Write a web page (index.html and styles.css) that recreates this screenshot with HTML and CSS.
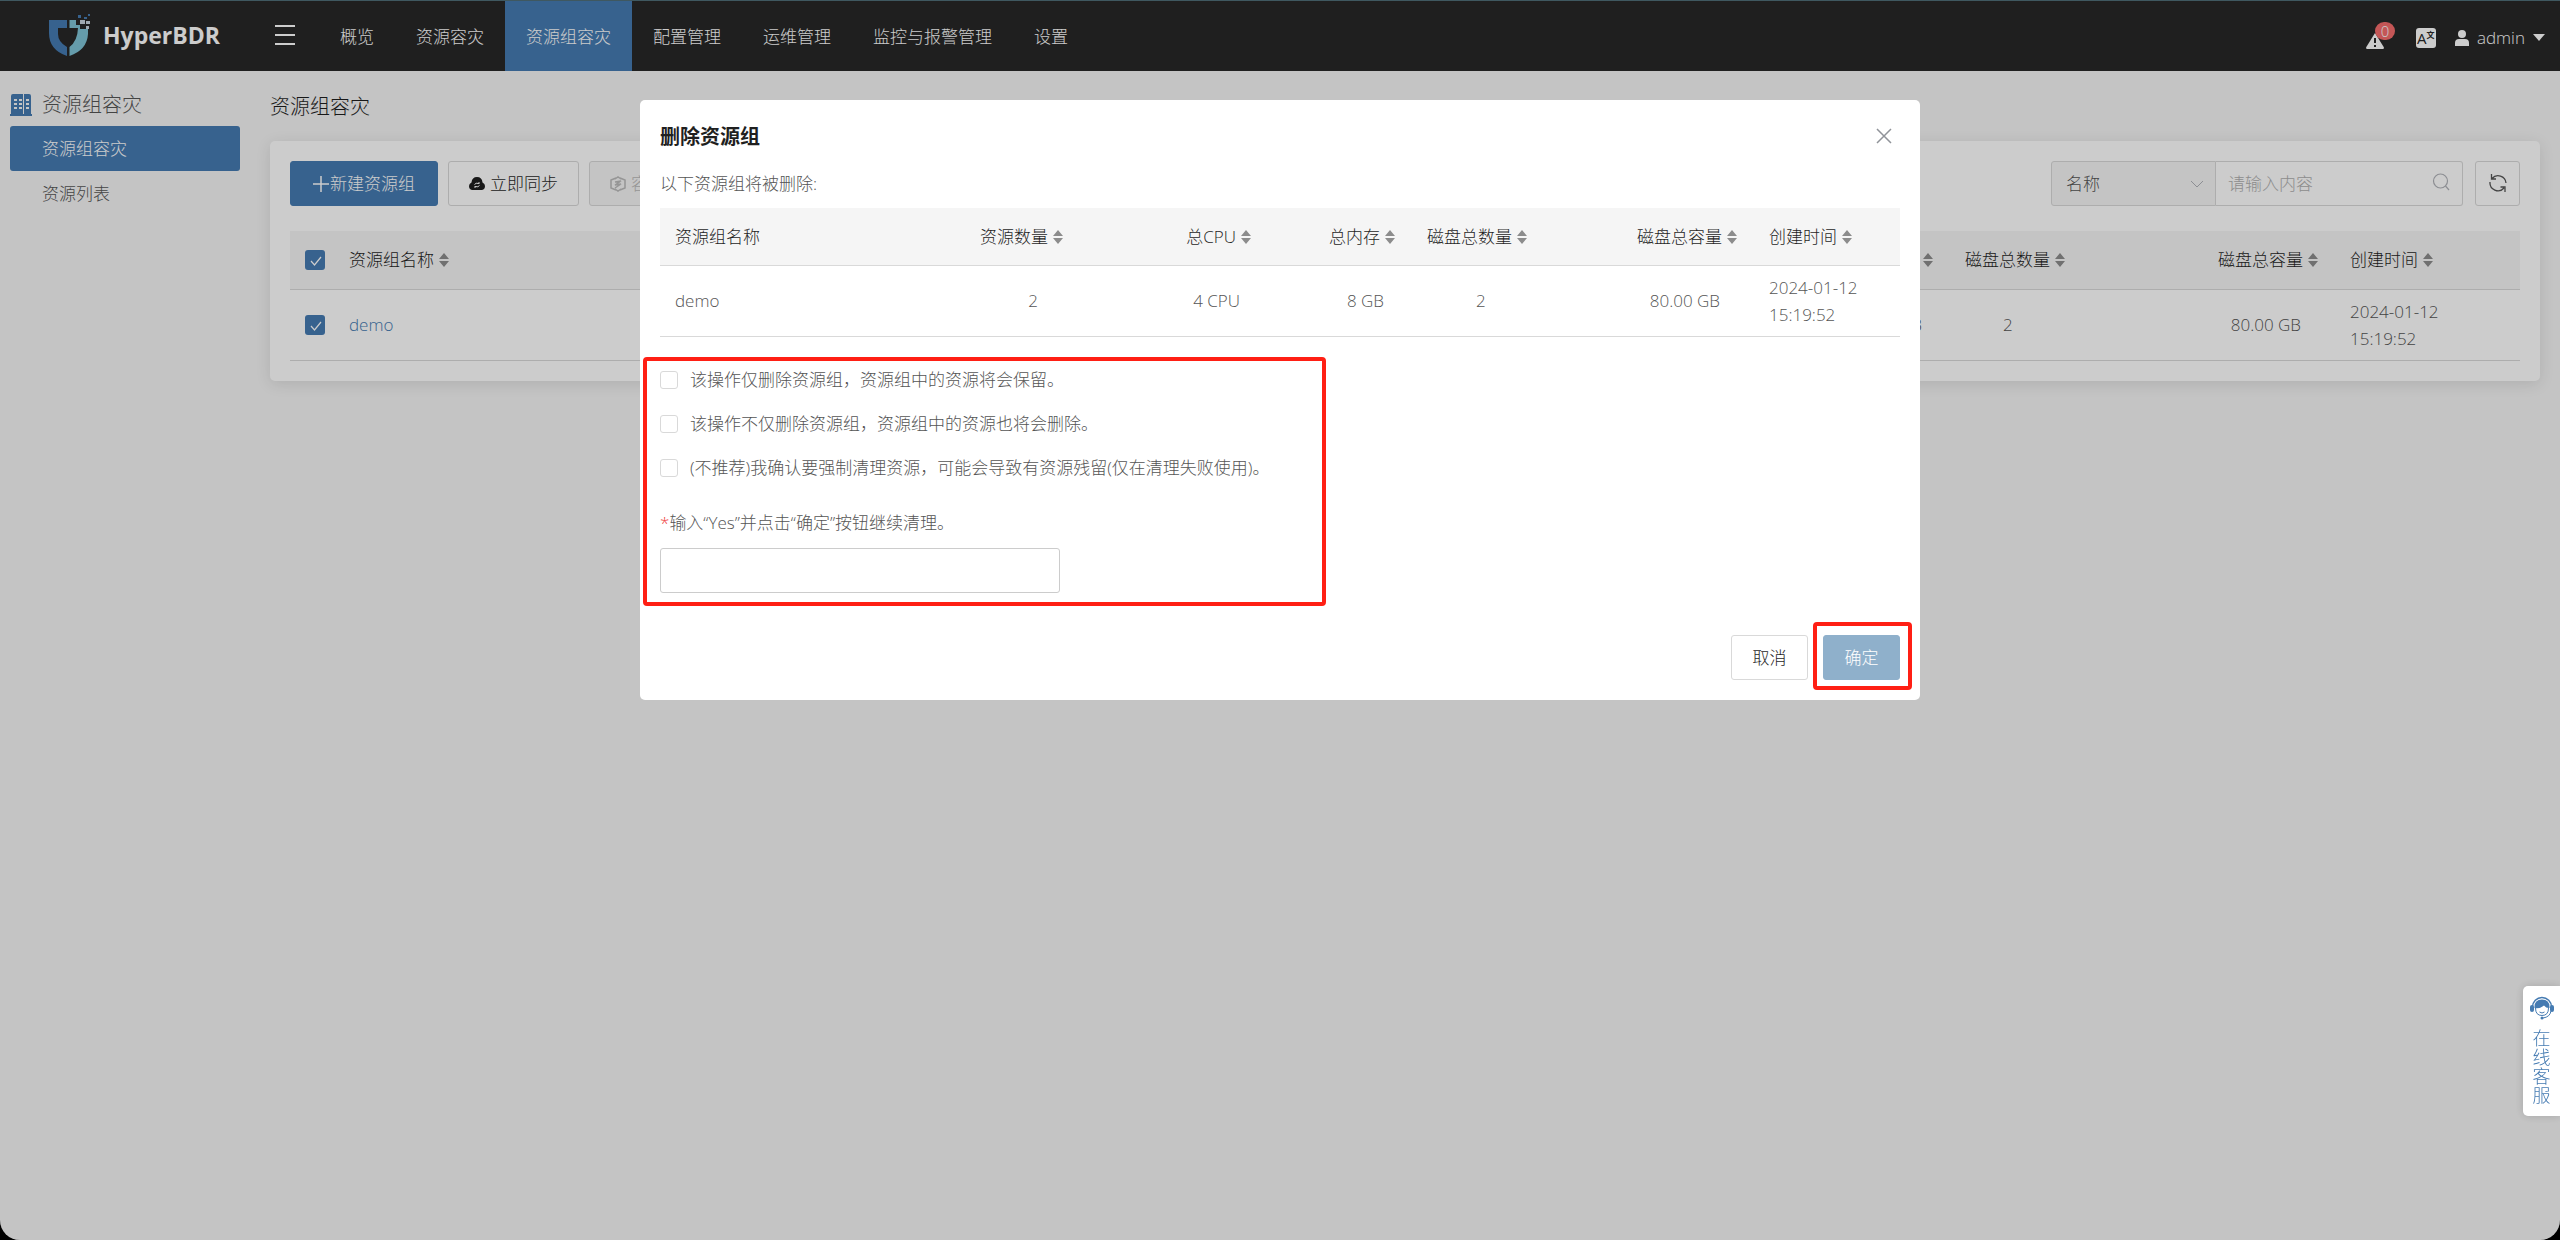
FILE: index.html
```html
<!DOCTYPE html>
<html lang="zh-CN">
<head>
<meta charset="utf-8">
<meta name="viewport" content="width=device-width, initial-scale=1">
<title>HyperBDR</title>
<link rel="stylesheet" href="styles.css">
</head>
<body>
<svg class="sprite" aria-hidden="true">
  <symbol id="sort" viewBox="0 0 10 16"><path d="M5 1 10 7H0zM5 15 0 9h10z" fill="currentColor"/></symbol>
  <symbol id="tick" viewBox="0 0 12 10"><path d="M1 5l3.500 4L11 1" fill="none" stroke="currentColor" stroke-width="1.2"/></symbol>
</svg>

<div class="app">
  <header class="topbar">
    <a class="brand" href="#">
      <svg class="brand-mark" viewBox="0 0 42 43" aria-hidden="true">
        <path d="M0 6h18v8H9v6q0 8 9 13v9Q0 36 0 19z" fill="#457bb2"/>
        <path d="M20.500 6h6.500v5h4v4h8v5q-1 16-18.500 22v-9q8-6 8.500-19h-8.500z" fill="#7fc4d6"/>
        <path d="M31 6h5v4h-5zM37 7h4v3h-4zM37 12h3v3h-3z" fill="#c8d4de"/>
        <path d="M29 1h3v3h-3zM35 3h3v2h-3zM39 0h2v2h-2z" fill="#457bb2"/>
      </svg>
      <span>HyperBDR</span>
    </a>
    <button class="menu-toggle" type="button" aria-label="菜单"><i></i><i></i><i></i></button>
    <nav class="nav">
      <a href="#">概览</a>
      <a href="#">资源容灾</a>
      <a href="#" class="active">资源组容灾</a>
      <a href="#">配置管理</a>
      <a href="#">运维管理</a>
      <a href="#">监控与报警管理</a>
      <a href="#">设置</a>
    </nav>
    <div class="tools">
      <a class="alarm" href="#" aria-label="报警">
        <svg viewBox="0 0 18 16" width="18" height="16"><path d="M9 0l9 14.500-.5 1.500H.5L0 14.500z" fill="currentColor"/><path d="M9 5v5M9 12v2" stroke="#272727" stroke-width="2"/></svg>
        <span class="badge">0</span>
      </a>
      <a class="lang" href="#" aria-label="语言"><b>A</b><sup>文</sup></a>
      <a class="user" href="#">
        <svg viewBox="0 0 14 16" width="14" height="16"><circle cx="7" cy="4" r="4" fill="currentColor"/><path d="M0 16v-3q0-4 4-4h6q4 0 4 4v3z" fill="currentColor"/></svg>
        <span>admin</span>
        <i class="caret"></i>
      </a>
    </div>
  </header>

  <div class="body">
    <aside class="sidebar">
      <h2>
        <svg viewBox="0 0 22 22" width="22" height="22" aria-hidden="true"><path d="M1 2q0-2 2-2h10v20h1V0h5q2 0 2 2v18h1v2H0v-2h1z" fill="#457bb2"/><path d="M4 5h3v2H4zM9 5h3v2H9zM16 5h3v2h-3zM4 9h3v2H4zM9 9h3v2H9zM16 9h3v2h-3zM4 13h3v2H4zM9 13h3v2H9zM16 13h3v2h-3z" fill="#f5f5f5"/></svg>
        资源组容灾
      </h2>
      <a href="#" class="active">资源组容灾</a>
      <a href="#">资源列表</a>
    </aside>

    <main class="content">
      <h1>资源组容灾</h1>
      <section class="card">
        <div class="toolbar">
          <button class="btn primary create" type="button">
            <svg viewBox="0 0 16 16" width="16" height="16"><path d="M8 0v16M0 8h16" stroke="currentColor" stroke-width="1.500"/></svg>新建资源组</button>
          <button class="btn" type="button">
            <svg viewBox="0 0 16 13" width="16" height="13"><path d="M3 13q-3-.5-3-4 0-2.500 2.500-3.500Q3 0 8 0t5.500 5.500Q16 6.500 16 9q0 3.500-3 4z" fill="currentColor"/><path d="M5.500 7.500q1-2 4.500-1M10 5v2M10.500 8.500q-1 2-4.500 1M6 11V9" stroke="#fff" fill="none"/></svg>
            立即同步</button>
          <button class="btn" type="button" disabled>
            <svg viewBox="0 0 16 16" width="16" height="16"><path d="M6 2 1 4v8l5 2M10 2l5 2v8l-5 2M5 3l3-2 3 2M5 13l3 2 3-2M5 6l6-1-6 4 6-1-6 4" fill="none" stroke="currentColor" stroke-width="1.500"/></svg>
            容灾</button>
          <form class="filters">
            <div class="select-wrap">
              <select aria-label="筛选字段"><option>名称</option></select>
              <svg viewBox="0 0 12 8" width="12" height="8"><path d="M0 1l6 6 6-6" fill="none" stroke="currentColor"/></svg>
            </div>
            <div class="search">
              <input type="search" placeholder="请输入内容" aria-label="搜索">
              <svg viewBox="0 0 18 18" width="18" height="18"><circle cx="8.500" cy="8" r="7" fill="none" stroke="currentColor" stroke-width="1.200"/><path d="M13.500 13 17 17" stroke="currentColor" stroke-width="1.200"/></svg>
            </div>
            <button class="btn refresh" type="button" aria-label="刷新">
              <svg viewBox="0 0 18 18" width="18" height="18" fill="none" stroke="currentColor" stroke-width="1.300"><path d="M3 4.500A8 8 0 0 1 17 9M1 8a8 8 0 0 0 14 6M2.500 0v5H7M16 18v-5h-4.500"/></svg>
            </button>
          </form>
        </div>

        <table class="grid">
          <colgroup><col class="w-check"><col><col class="w-num"><col class="w-num"><col class="w-num"><col class="w-disk"><col class="w-cap"><col class="w-date"></colgroup>
          <thead>
            <tr>
              <th><label class="check"><input type="checkbox" checked aria-label="全选"><svg><use href="#tick"/></svg></label></th>
              <th>资源组名称<svg class="sort"><use href="#sort"/></svg></th>
              <th class="num">资源数量<svg class="sort"><use href="#sort"/></svg></th>
              <th class="num">总CPU<svg class="sort"><use href="#sort"/></svg></th>
              <th class="num">总内存<svg class="sort"><use href="#sort"/></svg></th>
              <th>磁盘总数量<svg class="sort"><use href="#sort"/></svg></th>
              <th class="num">磁盘总容量<svg class="sort"><use href="#sort"/></svg></th>
              <th>创建时间<svg class="sort"><use href="#sort"/></svg></th>
            </tr>
          </thead>
          <tbody>
            <tr>
              <td><label class="check"><input type="checkbox" checked aria-label="demo"><svg><use href="#tick"/></svg></label></td>
              <td><a href="#">demo</a></td>
              <td class="num count">2</td>
              <td class="num">4 CPU</td>
              <td class="num">8 GB</td>
              <td class="disks">2</td>
              <td class="num cap">80.00 GB</td>
              <td>2024-01-12 15:19:52</td>
            </tr>
          </tbody>
        </table>
      </section>
    </main>
  </div>

  <div class="overlay">
    <section class="modal" role="dialog" aria-modal="true" aria-labelledby="modal-title">
      <header>
        <h2 id="modal-title">删除资源组</h2>
        <button class="close" type="button" aria-label="关闭"><svg viewBox="0 0 16 16" width="16" height="16"><path d="M1 1l14 14M15 1 1 15" stroke="currentColor" stroke-width="1.500"/></svg></button>
      </header>
      <p class="lead">以下资源组将被删除:</p>
      <table class="grid">
        <colgroup><col><col class="m-count"><col class="m-cpu"><col class="m-mem"><col class="m-disk"><col class="m-cap"><col class="m-date"></colgroup>
        <thead>
          <tr>
            <th>资源组名称</th>
            <th class="num">资源数量<svg class="sort"><use href="#sort"/></svg></th>
            <th class="num">总CPU<svg class="sort"><use href="#sort"/></svg></th>
            <th class="num">总内存<svg class="sort"><use href="#sort"/></svg></th>
            <th>磁盘总数量<svg class="sort"><use href="#sort"/></svg></th>
            <th class="num">磁盘总容量<svg class="sort"><use href="#sort"/></svg></th>
            <th>创建时间<svg class="sort"><use href="#sort"/></svg></th>
          </tr>
        </thead>
        <tbody>
          <tr>
            <td>demo</td>
            <td class="num count">2</td>
            <td class="num">4 CPU</td>
            <td class="num">8 GB</td>
            <td class="disks">2</td>
            <td class="num cap">80.00 GB</td>
            <td>2024-01-12 15:19:52</td>
          </tr>
        </tbody>
      </table>
      <form class="confirm marked">
        <label class="option"><input type="checkbox">该操作仅删除资源组，资源组中的资源将会保留。</label>
        <label class="option"><input type="checkbox">该操作不仅删除资源组，资源组中的资源也将会删除。</label>
        <label class="option"><input type="checkbox">(不推荐)我确认要强制清理资源，可能会导致有资源残留(仅在清理失败使用)。</label>
        <label class="answer" for="answer"><em>*</em>输入“Yes”并点击“确定”按钮继续清理。</label>
        <input class="answer-box" id="answer" type="text">
      </form>
      <footer>
        <button class="btn" type="button">取消</button>
        <span class="marked"><button class="btn primary muted" type="button">确定</button></span>
      </footer>
    </section>
  </div>

  <a class="service" href="#">
    <svg viewBox="0 0 24 24" width="24" height="24" aria-hidden="true"><path d="M2.500 11a9.500 9.500 0 0 1 19 0" fill="none" stroke="#457bb2" stroke-width="1.500"/><path d="M4.500 12Q4 3.500 12 3.500T19.500 12q-3 .5-5.500-2.500Q10 13 4.500 12z" fill="#457bb2"/><path d="M5.500 12q0 7.500 6.500 7.500t6.500-7.500M9.500 16q2.500 2 5 0M21 15q-1 6-8 7" fill="none" stroke="#457bb2"/><rect x="0" y="9" width="4" height="7" rx="2" fill="#457bb2"/><rect x="20" y="9" width="4" height="7" rx="2" fill="#457bb2"/><circle cx="12" cy="22" r="1.500" fill="#457bb2"/></svg>
    <span>在线客服</span>
  </a>
</div>
</body>
</html>
```
FILE: styles.css
```css
:root {
  --blue: #457bb2;
  --text: #555;
  --dark: #1f1f1f;
  --line: #d9d9d9;
  --mark: #ff1f14;
}

* { box-sizing: border-box; }

body {
  margin: 0;
  background: #000;
  color: var(--text);
  font: 300 17px/27px "Open Sans", "Noto Sans CJK SC", sans-serif;
}

button, input, select { font: inherit; color: inherit; }
button { cursor: pointer; }
a { color: inherit; text-decoration: none; }
h1, h2, p { margin: 0; }
svg { display: block; flex: none; }
.sprite { position: absolute; width: 0; height: 0; }

.app {
  display: flex;
  flex-direction: column;
  min-height: 100vh;
  overflow: hidden;
  background: #f5f5f5;
  border-radius: 0 0 20px 20px;
}

/* top bar */
.topbar {
  display: flex;
  align-items: stretch;
  height: 71px;
  background: #272727;
  border-top: 1px solid #4f6e78;
  color: #fff;
}
.brand {
  display: flex;
  align-items: center;
  gap: 12px;
  width: 275px;
  padding: 0 0 2px 49px;
  font-size: 23px;
  font-weight: 700;
}
.brand-mark { width: 42px; height: 43px; }
.menu-toggle {
  display: flex;
  flex-direction: column;
  justify-content: center;
  gap: 7px;
  width: 44px;
  padding: 0 0 2px;
  background: none;
  border: 0;
}
.menu-toggle i { width: 20px; height: 2px; background: #fff; }
.nav { display: flex; }
.nav a { display: flex; align-items: center; padding: 0 21px; }
.nav .active { background: var(--blue); }
.tools {
  display: flex;
  align-items: center;
  gap: 32px;
  margin-left: auto;
  padding: 3px 15px 0 0;
}
.alarm { position: relative; padding-top: 6px; }
.badge {
  position: absolute;
  left: 9px;
  top: -5px;
  width: 20px;
  height: 18px;
  border-radius: 9px;
  background: #f56c6c;
  font-size: 15px;
  line-height: 18px;
  text-align: center;
}
.lang {
  display: flex;
  width: 20px;
  height: 20px;
  padding-left: 1px;
  border-radius: 3px;
  background: #fff;
  color: #272727;
  font-size: 15px;
  line-height: 21px;
}
.lang sup { font-size: 8px; line-height: 14px; font-weight: 700; }
.user { display: flex; align-items: center; gap: 8px; margin-left: -13px; }
.caret { border: 6px solid transparent; border-top: 7px solid #fff; border-bottom: 0; }

/* page frame */
.body { display: flex; flex: 1; }
.sidebar { width: 250px; padding: 14px 10px; }
.sidebar h2 {
  display: flex;
  align-items: center;
  gap: 10px;
  height: 41px;
  padding-bottom: 2px;
  font-size: 20px;
  font-weight: 300;
}
.sidebar a { display: block; padding: 9px 32px; border-radius: 3px; }
.sidebar .active { background: var(--blue); color: #fff; }
.content { flex: 1; min-width: 0; padding: 20px; }
.content h1 { color: var(--dark); font-size: 20px; font-weight: 300; line-height: 32px; }

.card {
  margin-top: 18px;
  padding: 20px;
  background: #fff;
  border-radius: 5px;
  box-shadow: 0 3px 15px rgba(0, 0, 0, .1);
}
.toolbar { display: flex; gap: 10px; margin-bottom: 25px; }
.btn {
  display: flex;
  align-items: center;
  justify-content: center;
  gap: 5px;
  height: 45px;
  padding: 0 20px;
  background: #fff;
  border: 1px solid var(--line);
  border-radius: 3px;
  color: var(--dark);
  white-space: nowrap;
}
.btn:disabled { background: #f5f5f5; color: #bbb; }
.btn.primary { background: var(--blue); border-color: var(--blue); color: #fff; }
.btn.create { gap: 1px; padding: 0 22px; }
.filters { display: flex; margin-left: auto; }
.select-wrap, .search {
  display: flex;
  align-items: center;
  height: 45px;
  border: 1px solid var(--line);
  color: #b0b2b8;
}
.select-wrap { width: 165px; padding-right: 12px; background: #f5f5f5; border-radius: 3px 0 0 3px; }
.select-wrap select {
  flex: 1;
  height: 100%;
  padding: 0 14px;
  appearance: none;
  background: none;
  border: 0;
  color: var(--text);
}
.search { width: 247px; padding-right: 12px; border-left: 0; border-radius: 0 3px 3px 0; }
.search input { flex: 1; min-width: 0; padding: 0 12px; background: none; border: 0; appearance: none; }
.search input::placeholder { color: #b0b0b0; }
.search svg { margin-bottom: 4px; }
.refresh { width: 45px; margin-left: 12px; padding: 0 0 2px; color: var(--text); }

/* data tables */
.grid { width: 100%; border-collapse: collapse; table-layout: fixed; }
.grid th, .grid td { padding: 0 15px; border-bottom: 1px solid var(--line); text-align: left; }
.grid th { height: 58px; background: #f5f5f5; color: var(--dark); font-weight: 300; white-space: nowrap; }
.grid td { height: 71px; }
.grid td a { color: var(--blue); }
.grid .num { text-align: right; }
.grid th.num { padding-right: 17px; }
.grid td.num { padding-right: 28px; }
.grid td.count { padding-right: 42px; }
.grid td.cap { padding-right: 34px; }
.grid td.disks { padding-left: 53px; }
.modal .grid td.disks { padding-left: 64px; }
.sort { display: inline-block; width: 10px; height: 16px; margin-left: 5px; color: #8c8c8c; vertical-align: -2px; }
.w-check { width: 44px; }
.w-num { width: 310px; }
.w-disk { width: 249px; }
.w-cap { width: 136px; }
.w-date { width: 185px; }
.m-count { width: 190px; }
.m-cpu { width: 188px; }
.m-mem { width: 144px; }
.m-disk { width: 207px; }
.m-cap { width: 135px; }
.m-date { width: 146px; }

.check { position: relative; display: block; width: 20px; height: 20px; color: #fff; }
.check input { display: block; width: 20px; height: 20px; margin: 0; appearance: none; background: var(--blue); border-radius: 3px; }
.check svg { position: absolute; left: 5px; top: 6px; width: 12px; height: 10px; }

/* delete dialog */
.overlay { position: fixed; inset: 0; padding-top: 100px; background: rgba(0, 0, 0, .2); border-radius: 0 0 20px 20px; }
.modal { width: 50%; margin: 0 auto; padding: 20px; background: #fff; border-radius: 5px; }
.modal header { display: flex; align-items: center; justify-content: space-between; height: 32px; }
.modal h2 { color: var(--dark); font-size: 20px; font-weight: 700; }
.close { padding: 0; margin-right: 8px; background: none; border: 0; color: #909399; }
.lead { margin: 18px 0 11px; }
.modal .grid th { height: 57px; }
.marked { border: 4px solid var(--mark); border-radius: 4px; }
.confirm { width: 683px; max-width: 100%; margin: 20px 0 0 -17px; padding: 5px 13px 9px; }
.option { display: flex; align-items: center; gap: 12px; height: 28px; margin-bottom: 16px; white-space: nowrap; }
.option input { width: 18px; height: 18px; margin: 0; appearance: none; border: 1px solid var(--line); border-radius: 3px; }
.answer { display: block; margin: 27px 0 12px; }
.answer em { color: #f04040; font-style: normal; }
.answer-box { display: block; width: 400px; height: 45px; padding: 0 15px; border: 1px solid #ccc; border-radius: 3px; }
.modal footer { display: flex; align-items: center; justify-content: flex-end; gap: 5px; margin: 16px -12px -10px 0; }
.modal footer > .btn { margin-top: 3px; }
.modal footer .marked { padding: 9px 8px 6px 6px; }
.modal footer .btn { width: 77px; }
.btn.muted { background: #8fb0cb; border-color: #8fb0cb; }

/* floating support tab */
.service {
  position: fixed;
  right: 0;
  top: 986px;
  display: flex;
  flex-direction: column;
  align-items: center;
  gap: 9px;
  width: 37px;
  padding: 10px 8px 11px;
  background: #fff;
  border-radius: 5px 0 0 5px;
  box-shadow: 0 0 10px rgba(0, 0, 0, .15);
  color: var(--blue);
  font-size: 18px;
  line-height: 19px;
}
.service span { width: 18px; word-break: break-all; }
```
